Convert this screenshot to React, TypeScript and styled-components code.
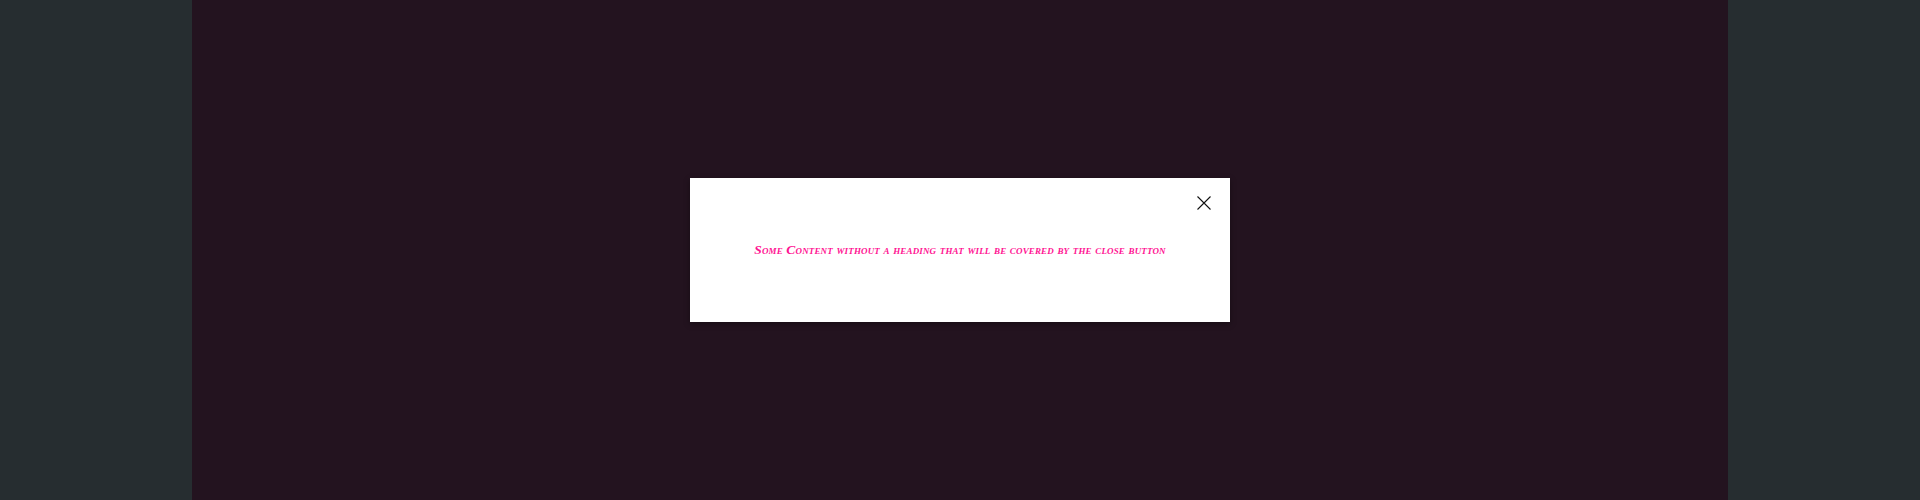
import React from "react";
import styled, { createGlobalStyle } from "styled-components";

const GlobalStyle = createGlobalStyle`
  html, body {
    margin: 0;
    padding: 0;
    background: #262d30;
  }
`;

const Page = styled.div`
  display: flex;
  justify-content: center;
  height: 500px;
  background: #262d30;
`;

const Stage = styled.main`
  display: flex;
  align-items: center;
  justify-content: center;
  width: 80%;
  height: 100%;
  background: #23131f;
`;

const Dialog = styled.div`
  position: relative;
  box-sizing: border-box;
  display: flex;
  align-items: center;
  justify-content: center;
  width: 540px;
  height: 144px;
  background: #ffffff;
  box-shadow: 0 2px 6px rgba(0, 0, 0, 0.35);
`;

const Content = styled.p`
  margin: 0;
  font-family: "Liberation Serif", "Times New Roman", serif;
  font-size: 13.5px;
  letter-spacing: 0.15px;
  font-style: italic;
  font-weight: bold;
  font-variant: small-caps;
  color: #ff1493;
`;

const CloseButton = styled.button`
  position: absolute;
  top: 18px;
  right: 19px;
  display: flex;
  align-items: center;
  justify-content: center;
  width: 14px;
  height: 14px;
  padding: 0;
  border: 0;
  background: transparent;
  cursor: pointer;
`;

function CloseIcon() {
  return (
    <svg width="14" height="14" viewBox="0 0 14 14" aria-hidden="true">
      <path d="M0.5 0.5 L13.5 13.5 M13.5 0.5 L0.5 13.5" stroke="#111" strokeWidth="1.1" fill="none" />
    </svg>
  );
}

export default function App() {
  return (
    <>
      <GlobalStyle />
      <Page>
        <Stage>
          <Dialog role="dialog">
            <Content>Some Content without a heading that will be covered by the close button</Content>
            <CloseButton aria-label="Close">
              <CloseIcon />
            </CloseButton>
          </Dialog>
        </Stage>
      </Page>
    </>
  );
}
